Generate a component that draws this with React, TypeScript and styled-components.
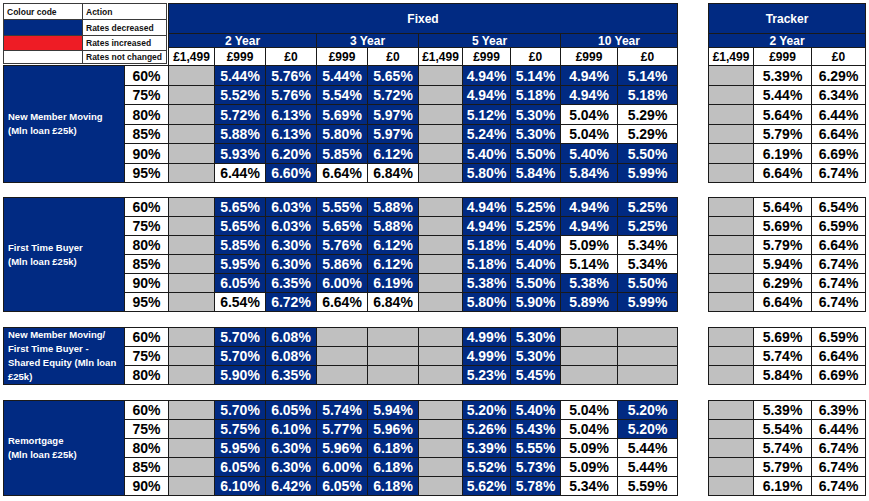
import React from 'react';
import styled, { createGlobalStyle } from 'styled-components';

const NAVY = '#012a82';
const LINE = '#1a1a1a';
const GREY = '#c0c0c0';

type Tone = 'navy' | 'white' | 'grey' | 'red';

const GlobalStyle = createGlobalStyle`
  html, body { margin: 0; padding: 0; background: #fff; }
  body { font-family: "Liberation Sans", Arial, sans-serif; }
`;

const Sheet = styled.div`
  display: flex;
  align-items: flex-start;
  gap: 30px;
  padding: 3px 0 0 3px;
`;

const Block = styled.div`
  display: flex;
  flex-direction: column;
`;

const TopRow = styled.div`
  display: flex;
  align-items: flex-start;
  gap: 1px;
`;

const Legend = styled.div`
  display: grid;
  grid-template-columns: 78px 83px;
  grid-template-rows: 15px 15px 14px 12px;
  gap: 1px;
  padding: 1px;
  background: #3a3a3a;
`;

const LegendCell = styled.div<{ $tone?: Tone }>`
  display: flex;
  align-items: center;
  padding-left: 3px;
  font-size: 8.5px;
  font-weight: 700;
  white-space: nowrap;
  overflow: hidden;
  color: #111;
  background: ${(p) => (p.$tone === 'navy' ? NAVY : p.$tone === 'red' ? '#ee1c25' : '#fff')};
`;

const HeadGrid = styled.div<{ $cols: string }>`
  display: grid;
  grid-template-columns: ${(p) => p.$cols};
  grid-template-rows: 29px 13px 17px;
  gap: 1px;
  padding: 1px 1px 0 1px;
  background: ${LINE};
`;

const HeadCell = styled.div<{ $span?: number; $light?: boolean }>`
  grid-column: span ${(p) => p.$span ?? 1};
  display: flex;
  align-items: center;
  justify-content: center;
  font-size: 12px;
  font-weight: 700;
  background: ${(p) => (p.$light ? '#fff' : NAVY)};
  color: ${(p) => (p.$light ? '#000' : '#fff')};
`;

const Section = styled.div<{ $cols: string; $rows: string; $gap: number }>`
  display: grid;
  grid-template-columns: ${(p) => p.$cols};
  grid-template-rows: ${(p) => p.$rows};
  gap: 1px;
  padding: 1px;
  margin-top: ${(p) => p.$gap}px;
  background: ${LINE};
`;

const Label = styled.div`
  grid-row: 1 / -1;
  display: flex;
  flex-direction: column;
  justify-content: center;
  padding-left: 4px;
  background: ${NAVY};
  color: #fff;
  font-size: 9.5px;
  font-weight: 700;
  line-height: 14px;
`;

const Cell = styled.div<{ $tone: Tone }>`
  display: flex;
  align-items: center;
  justify-content: center;
  font-size: 14px;
  font-weight: 700;
  background: ${(p) => (p.$tone === 'navy' ? NAVY : p.$tone === 'grey' ? GREY : '#fff')};
  color: ${(p) => (p.$tone === 'navy' ? '#fff' : '#000')};
`;

const FIXED_HEAD_COLS = '45px 50px 50px 50px 50px 43px 47px 49px 56px 59px';
const FIXED_COLS = '120px 43px ' + FIXED_HEAD_COLS;
const TRACKER_COLS = '44px 57px 53px';

// '!' = white cell (rate not changed), null = grey, otherwise navy
type Row = { ltv: string; fixed: (string | null)[]; tracker: [string, string] };
type Group = { label: string[]; rows: Row[]; rowTpl: string; gap: number };

const groups: Group[] = [
  {
    label: ['New Member Moving', '(Mln loan £25k)'],
    rowTpl: '19px 18px 19px 18px 19px 18px',
    gap: 0,
    rows: [
      { ltv: '60%', fixed: ['5.44', '5.76', '5.44', '5.65', '4.94', '5.14', '4.94', '5.14'], tracker: ['5.39', '6.29'] },
      { ltv: '75%', fixed: ['5.52', '5.76', '5.54', '5.72', '4.94', '5.18', '4.94', '5.18'], tracker: ['5.44', '6.34'] },
      { ltv: '80%', fixed: ['5.72', '6.13', '5.69', '5.97', '5.12', '5.30', '!5.04', '!5.29'], tracker: ['5.64', '6.44'] },
      { ltv: '85%', fixed: ['5.88', '6.13', '5.80', '5.97', '5.24', '5.30', '!5.04', '!5.29'], tracker: ['5.79', '6.64'] },
      { ltv: '90%', fixed: ['5.93', '6.20', '5.85', '6.12', '5.40', '5.50', '5.40', '5.50'], tracker: ['6.19', '6.69'] },
      { ltv: '95%', fixed: ['!6.44', '6.60', '!6.64', '!6.84', '5.80', '5.84', '5.84', '5.99'], tracker: ['6.64', '6.74'] },
    ],
  },
  {
    label: ['First Time Buyer', '(Mln loan £25k)'],
    rowTpl: 'repeat(6, 18px)',
    gap: 14,
    rows: [
      { ltv: '60%', fixed: ['5.65', '6.03', '5.55', '5.88', '4.94', '5.25', '4.94', '5.25'], tracker: ['5.64', '6.54'] },
      { ltv: '75%', fixed: ['5.65', '6.03', '5.65', '5.88', '4.94', '5.25', '4.94', '5.25'], tracker: ['5.69', '6.59'] },
      { ltv: '80%', fixed: ['5.85', '6.30', '5.76', '6.12', '5.18', '5.40', '!5.09', '!5.34'], tracker: ['5.79', '6.64'] },
      { ltv: '85%', fixed: ['5.95', '6.30', '5.86', '6.12', '5.18', '5.40', '!5.14', '!5.34'], tracker: ['5.94', '6.74'] },
      { ltv: '90%', fixed: ['6.05', '6.35', '6.00', '6.19', '5.38', '5.50', '5.38', '5.50'], tracker: ['6.29', '6.74'] },
      { ltv: '95%', fixed: ['!6.54', '6.72', '!6.64', '!6.84', '5.80', '5.90', '5.89', '5.99'], tracker: ['6.64', '6.74'] },
    ],
  },
  {
    label: ['New Member Moving/', 'First Time Buyer -', 'Shared Equity (Mln loan', '£25k)'],
    rowTpl: 'repeat(3, 18px)',
    gap: 15,
    rows: [
      { ltv: '60%', fixed: ['5.70', '6.08', null, null, '4.99', '5.30', null, null], tracker: ['5.69', '6.59'] },
      { ltv: '75%', fixed: ['5.70', '6.08', null, null, '4.99', '5.30', null, null], tracker: ['5.74', '6.64'] },
      { ltv: '80%', fixed: ['5.90', '6.35', null, null, '5.23', '5.45', null, null], tracker: ['5.84', '6.69'] },
    ],
  },
  {
    label: ['Remortgage', '(Mln loan £25k)'],
    rowTpl: 'repeat(5, 18px)',
    gap: 15,
    rows: [
      { ltv: '60%', fixed: ['5.70', '6.05', '5.74', '5.94', '5.20', '5.40', '!5.04', '5.20'], tracker: ['5.39', '6.39'] },
      { ltv: '75%', fixed: ['5.75', '6.10', '5.77', '5.96', '5.26', '5.43', '!5.04', '5.20'], tracker: ['5.54', '6.44'] },
      { ltv: '80%', fixed: ['5.95', '6.30', '5.96', '6.18', '5.39', '5.55', '!5.09', '!5.44'], tracker: ['5.74', '6.74'] },
      { ltv: '85%', fixed: ['6.05', '6.30', '6.00', '6.18', '5.52', '5.73', '!5.09', '!5.44'], tracker: ['5.79', '6.74'] },
      { ltv: '90%', fixed: ['6.10', '6.42', '6.05', '6.18', '5.62', '5.78', '!5.34', '!5.59'], tracker: ['6.19', '6.74'] },
    ],
  },
];

const rate = (v: string | null, key: string) => {
  if (v === null) return <Cell key={key} $tone="grey" />;
  const white = v.startsWith('!');
  return (
    <Cell key={key} $tone={white ? 'white' : 'navy'}>
      {(white ? v.slice(1) : v) + '%'}
    </Cell>
  );
};

const prices = ['£1,499', '£999', '£0', '£999', '£0', '£1,499', '£999', '£0', '£999', '£0'];

const App: React.FC = () => {
  return (
    <>
      <GlobalStyle />
      <Sheet>
        <Block>
          <TopRow>
            <Legend>
              <LegendCell>Colour code</LegendCell>
              <LegendCell>Action</LegendCell>
              <LegendCell $tone="navy" />
              <LegendCell>Rates decreased</LegendCell>
              <LegendCell $tone="red" />
              <LegendCell>Rates increased</LegendCell>
              <LegendCell />
              <LegendCell>Rates not changed</LegendCell>
            </Legend>
            <HeadGrid $cols={FIXED_HEAD_COLS}>
              <HeadCell $span={10}>Fixed</HeadCell>
              <HeadCell $span={3}>2 Year</HeadCell>
              <HeadCell $span={2}>3 Year</HeadCell>
              <HeadCell $span={3}>5 Year</HeadCell>
              <HeadCell $span={2}>10 Year</HeadCell>
              {prices.map((p, i) => (
                <HeadCell key={i} $light>
                  {p}
                </HeadCell>
              ))}
            </HeadGrid>
          </TopRow>

          {groups.map((g, gi) => (
            <Section key={gi} $cols={FIXED_COLS} $rows={g.rowTpl} $gap={g.gap}>
              <Label>
                {g.label.map((l) => (
                  <span key={l}>{l}</span>
                ))}
              </Label>
              {g.rows.map((r, ri) => [
                <Cell key={`l${ri}`} $tone="white">{r.ltv}</Cell>,
                <Cell key={`a${ri}`} $tone="grey" />,
                ...r.fixed.slice(0, 4).map((v, i) => rate(v, `b${ri}-${i}`)),
                <Cell key={`c${ri}`} $tone="grey" />,
                ...r.fixed.slice(4).map((v, i) => rate(v, `d${ri}-${i}`)),
              ])}
            </Section>
          ))}
        </Block>

        <Block>
          <HeadGrid $cols={TRACKER_COLS}>
            <HeadCell $span={3}>Tracker</HeadCell>
            <HeadCell $span={3}>2 Year</HeadCell>
            <HeadCell $light>£1,499</HeadCell>
            <HeadCell $light>£999</HeadCell>
            <HeadCell $light>£0</HeadCell>
          </HeadGrid>

          {groups.map((g, gi) => (
            <Section key={gi} $cols={TRACKER_COLS} $rows={g.rowTpl} $gap={g.gap}>
              {g.rows.map((r, ri) => [
                <Cell key={`g${ri}`} $tone="grey" />,
                <Cell key={`a${ri}`} $tone="white">{r.tracker[0]}%</Cell>,
                <Cell key={`b${ri}`} $tone="white">{r.tracker[1]}%</Cell>,
              ])}
            </Section>
          ))}
        </Block>
      </Sheet>
    </>
  );
};

export default App;
